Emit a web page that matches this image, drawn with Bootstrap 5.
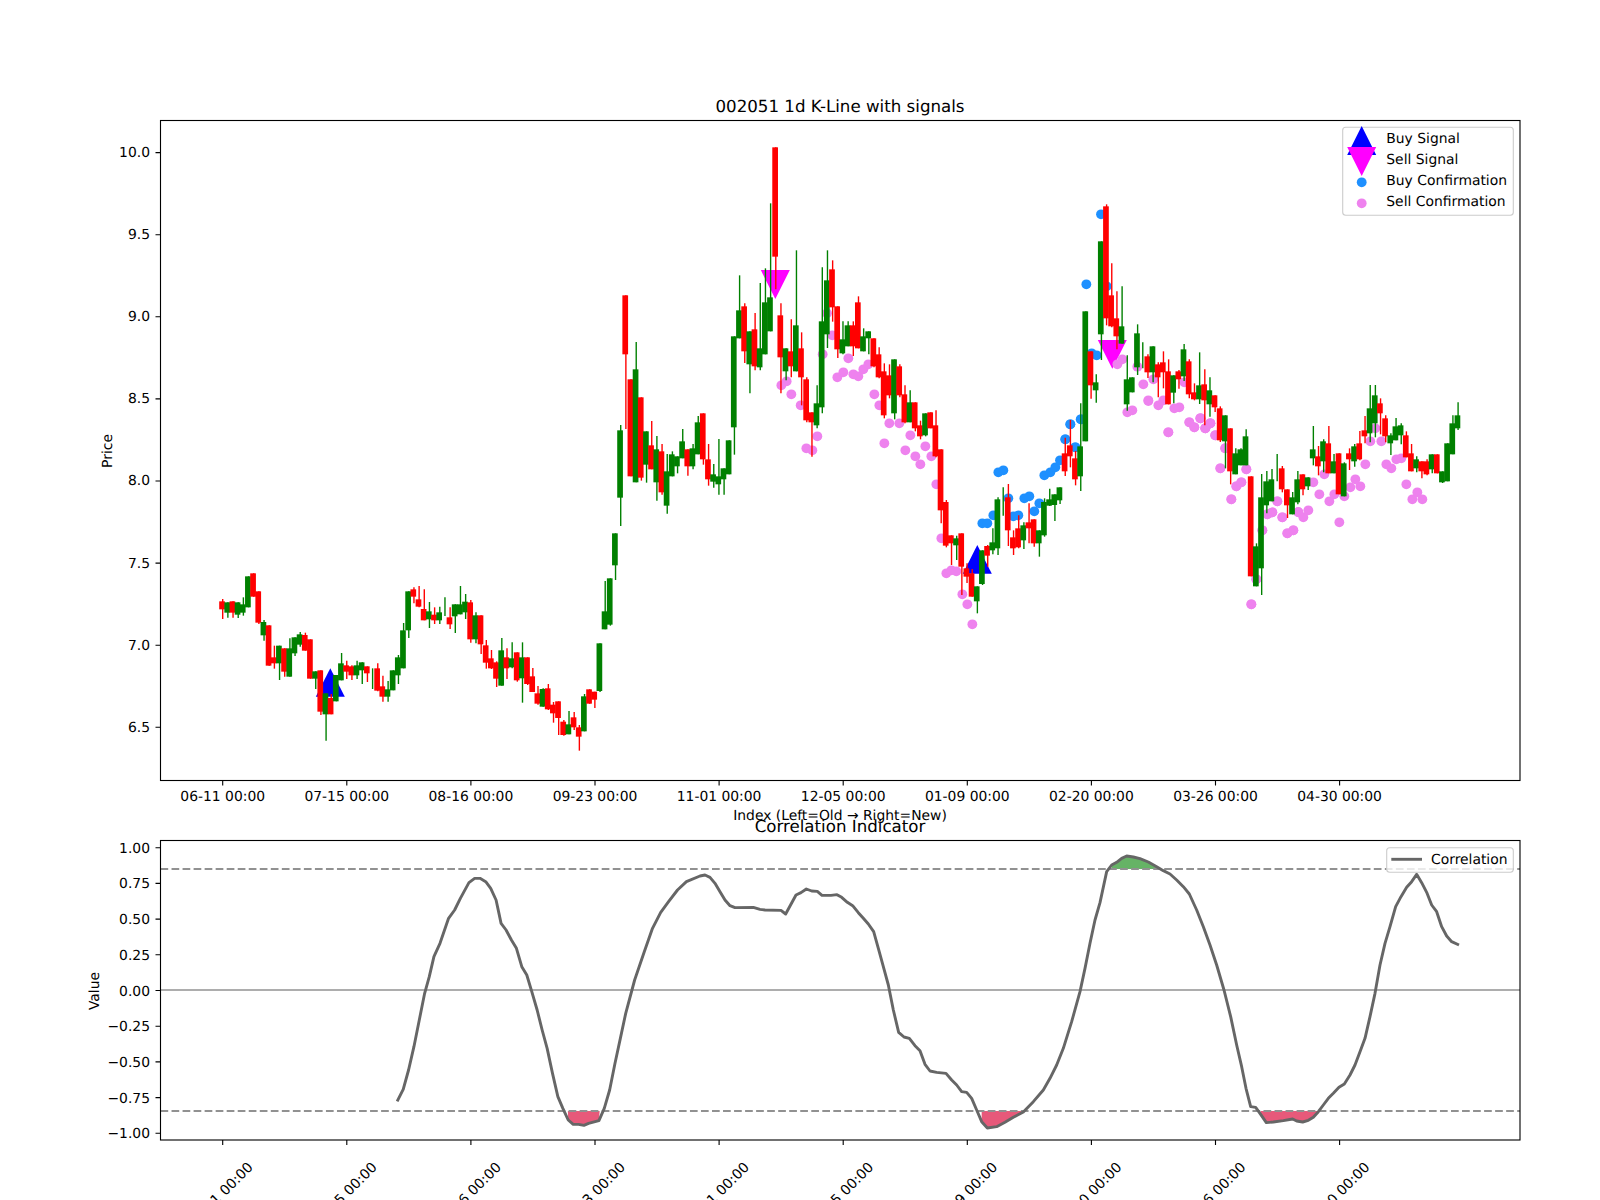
<!DOCTYPE html>
<html lang="en">
<head>
<meta charset="utf-8">
<title>002051 1d K-Line with signals</title>
<link href="https://cdn.jsdelivr.net/npm/bootstrap@5.3.0/dist/css/bootstrap.min.css" rel="stylesheet">
<style>
html,body{background:#fff;margin:0;padding:0}
.plot-figure{width:1600px;height:1200px;overflow:hidden}
.plot-svg{display:block;width:1600px;height:1200px}
.plot-svg text{font-family:"DejaVu Sans",sans-serif;fill:#000;text-rendering:geometricPrecision}
.tk{font-size:13.89px}
.ttl{font-size:16.67px}
.ttk text{text-anchor:end}
.mid{text-anchor:middle}
.frame{fill:none;stroke:#000;stroke-width:1.11}
.tickmark{stroke:#000;stroke-width:1.11;fill:none}
.lg-box{fill:#fff;fill-opacity:.8;stroke:#ccc;stroke-width:1.11}
.dash{stroke:#919191;stroke-width:2.08;stroke-dasharray:7.7 3.33;fill:none}
.zero{stroke:#adadad;stroke-width:2.08;fill:none}
.corr{stroke:#666;stroke-width:2.9;fill:none;stroke-linejoin:round}
.fill-r{fill:#e7597a}
.fill-g{fill:#66b366}
</style>
</head>
<body class="bg-white">
<main class="d-flex justify-content-start">
<figure class="plot-figure m-0">
<svg class="plot-svg" viewBox="0 0 1600 1200" xmlns="http://www.w3.org/2000/svg">
  <g id="marks"></g>
  <rect class="frame" x="160.5" y="120.5" width="1359.5" height="660"/>
  <path class="tickmark" id="ticks" d=""/>

  <!-- upper axes text -->
  <text class="ttl mid" x="840" y="112">002051 1d K-Line with signals</text>
  <g class="tk ttk">
    <text x="150" y="157">10.0</text><text x="150" y="239.1">9.5</text><text x="150" y="321.2">9.0</text>
    <text x="150" y="403.3">8.5</text><text x="150" y="485.4">8.0</text><text x="150" y="567.5">7.5</text>
    <text x="150" y="649.6">7.0</text><text x="150" y="731.7">6.5</text>
  </g>
  <text class="tk mid" transform="translate(112,451) rotate(-90)">Price</text>
  <g class="tk mid">
    <text x="222.7" y="801">06-11 00:00</text><text x="346.8" y="801">07-15 00:00</text>
    <text x="470.9" y="801">08-16 00:00</text><text x="595" y="801">09-23 00:00</text>
    <text x="719.1" y="801">11-01 00:00</text><text x="843.2" y="801">12-05 00:00</text>
    <text x="967.3" y="801">01-09 00:00</text><text x="1091.4" y="801">02-20 00:00</text>
    <text x="1215.5" y="801">03-26 00:00</text><text x="1339.6" y="801">04-30 00:00</text>
  </g>
  <text class="tk mid" x="840" y="820">Index (Left=Old → Right=New)</text>

  <!-- upper legend -->
  <rect class="lg-box" x="1342.7" y="127.3" width="170.6" height="88" rx="3"/>
  <polygon points="1361.7,126 1376.2,155 1347.2,155" fill="#00f"/>
  <polygon points="1347.2,147 1376.2,147 1361.7,176" fill="#f0f"/>
  <circle cx="1361.7" cy="182.3" r="4.9" fill="#1e90ff"/>
  <circle cx="1361.7" cy="203.3" r="4.9" fill="#ee82ee"/>
  <g class="tk">
    <text x="1386.3" y="143.3">Buy Signal</text><text x="1386.3" y="164.3">Sell Signal</text>
    <text x="1386.3" y="185.3">Buy Confirmation</text><text x="1386.3" y="206.3">Sell Confirmation</text>
  </g>

  <!-- lower axes -->
  <text class="ttl mid" x="840" y="832">Correlation Indicator</text>
  <g id="lower"></g>
  <rect class="frame" x="160.5" y="840.5" width="1359.5" height="299.5"/>
  <g class="tk ttk">
    <text x="150" y="852.7">1.00</text><text x="150" y="888.4">0.75</text><text x="150" y="924.1">0.50</text>
    <text x="150" y="959.8">0.25</text><text x="150" y="995.5">0.00</text><text x="150" y="1031.2">−0.25</text>
    <text x="150" y="1066.9">−0.50</text><text x="150" y="1102.6">−0.75</text><text x="150" y="1138.3">−1.00</text>
  </g>
  <text class="tk mid" transform="translate(99,991) rotate(-90)">Value</text>
  <g class="tk mid">
    <text transform="translate(220.2,1194.5) rotate(-45)" y="5">06-11 00:00</text>
    <text transform="translate(344.3,1194.5) rotate(-45)" y="5">07-15 00:00</text>
    <text transform="translate(468.4,1194.5) rotate(-45)" y="5">08-16 00:00</text>
    <text transform="translate(592.5,1194.5) rotate(-45)" y="5">09-23 00:00</text>
    <text transform="translate(716.6,1194.5) rotate(-45)" y="5">11-01 00:00</text>
    <text transform="translate(840.7,1194.5) rotate(-45)" y="5">12-05 00:00</text>
    <text transform="translate(964.8,1194.5) rotate(-45)" y="5">01-09 00:00</text>
    <text transform="translate(1088.9,1194.5) rotate(-45)" y="5">02-20 00:00</text>
    <text transform="translate(1213,1194.5) rotate(-45)" y="5">03-26 00:00</text>
    <text transform="translate(1337.1,1194.5) rotate(-45)" y="5">04-30 00:00</text>
  </g>
  <rect class="lg-box" x="1386.7" y="847.7" width="126.6" height="24.6" rx="3"/>
  <line class="corr" x1="1391.3" y1="859.3" x2="1422" y2="859.3"/>
  <text class="tk" x="1431" y="864">Correlation</text>
</svg>
</figure>
</main>
<script src="https://cdn.jsdelivr.net/npm/bootstrap@5.3.0/dist/js/bootstrap.bundle.min.js"></script>
<script>
const NS='http://www.w3.org/2000/svg';
function el(parent,n,a){const e=document.createElementNS(NS,n);for(const k in a)e.setAttribute(k,a[k]);parent.appendChild(e);return e}
const marks=document.getElementById('marks'),lower=document.getElementById('lower');
const X=i=>222.7+5.169*i;

/* signals */
[[330.3,668.3,696.7,'#00f'],[977.3,545,573.7,'#00f'],[775.3,299,270,'#f0f'],[1112.3,368.7,340,'#f0f']].forEach(t=>{
  el(marks,'polygon',{points:`${t[0]},${t[1]} ${t[0]+14.5},${t[2]} ${t[0]-14.5},${t[2]}`,fill:t[3]});
});

/* confirmations, read in crop coordinates: [x0,y0,list] */
const blue=[
 [900,400,"247,370 262,370 280,346 295,217 310,211 325,295 340,349 355,346 373,295 388,289 403,334 418,310 433,226 451,217 466,202 480,181 496,118 511,73 526,142 544,58"],
 [1040,180,"76,778 91,733 106,802 122,718 139,313 155,520 170,526 183,103 200,319"]];
const violet=[
 [600,130,"681,550 697,616 668,673 544,766 560,754 574,793 602,826 619,955 637,961 652,919 712,742 730,727 745,685 760,733 775,739 790,718 805,703 823,793 838,826 853,940 868,880 898,880 916,961 931,916 946,979 961,1003 976,949 994,979 1009,1063"],
 [900,400,"124,415 139,520 154,511 169,514 187,583 202,613 217,673 682,37 697,31 745,3 775,16 805,97 823,25 838,22 868,67 883,82 901,55 916,85 931,70 946,106 976,145 961,205 1039,208 1024,247 1009,259 994,298 1087,391 1102,343 1117,337 1069,538 1054,613 1132,304 1147,352 1162,400 1180,391 1195,336"],
 [1040,180,"232,553 247,538 292,560 310,613 325,661 340,598 370,661 433,607 448,727 463,742 481,715 496,745 511,730 526,766 385,757 556,805"],
 [1200,380,"2,115 16,145 31,130 46,166 76,205 61,265 139,268 94,358 109,319 124,307 187,451 169,598 154,673 202,403 217,397 232,364 247,412 262,460 280,451 295,397 310,412 325,391 340,307 358,343 373,283 388,364 403,343 418,427 433,349 451,322 466,298 481,319 496,253 511,184 526,145 544,184 559,253 574,265 589,238 604,235 619,313 637,358 652,337 667,358"]];
function dots(sets,col){sets.forEach(s=>s[2].split(' ').forEach(p=>{const [a,b]=p.split(',').map(Number);
  el(marks,'circle',{cx:s[0]+a/3,cy:s[1]+b/3,r:4.9,fill:col});}));}
dots(blue,'#1e90ff');dots(violet,'#ee82ee');

/* candles: colour bodyTop bodyBottom wickTop wickBottom, in crop coordinates */
const candles=[
[500,`r 304 328 297 357|g 307 338 307 353|r 304 338 304 353|g 307 344 307 354|g 313 338 292 347|g 229 322|r 220 290|r 274 368 274 372|g 366 406 360 422|r 376 497|r 472 490 437 506|g 437 490 437 540|r 445 515 445 530|g 445 530 415 530|g 412 460 412 468|g 403 434 396 440|r 405 452 398 452|r 418 536|g 514 536 514 567|r 511 635 511 645|g 580 643 580 722|r 594 643 582 643|g 525 604|g 490 541 459 541|r 496 515 482 537|r 499 526 496 540|g 496 526 482 537|g 487 511 487 552|r 499 520 499 546|g - - 505 567|r 505 572 490 574|r 559 590 527 605|g 568 590 543 605|g 511 571|g 472 526 465 552|g 391 505 369 505|g 274 391 274 414|r 268 290 262 310|r 298 320 258 322|r 327 361 268 361|g 334 358 306 384|r 344 361 322 372|g 337 361 320 372|g - - 292 348|r 352 373 322 387|g 313 349 313 399|g 313 343 258 343|g 305 337 282 357|r 307 418 300 428|g 346 418 337 430|r 346 433 346 462|r 436 488 420 506|r 475 505 450 507|r 487 536 484 561|g 451 557 414 557|r 472 505 445 537|g 475 502 427 505|r 457 541 457 545|g 472 535 427 608|r 472 552 472 555|r 529 576 504 576|r 580 611 558 614|g 567 620 565 620|r 565 628 552 630|r 614 640 606 668|r 604 654 604 705|r 665 705 660 707|g 673 703 633 703|r 652 682 636 690|r 682 710 675 752|g 589 694 582 694|r 568 611|r 575 599 575 624|g 430 573 430 576|g 334 388 243 388|g 235 374 235 377|g 100 196 100 240`],
[130,`g 901 1103 885 1188|r 496 673 496 897|r 748 1039|g 718 1057 636 1057|r 802 1043 802 1052|g 904 1004 904 1058|r 946 1018 873 1018|g 958 1057 918 1112|r 964 1087 942 1094|g 1024 1127 972 1151|g 973 1039 964 1039|g 979 1009 979 1030|g 934 985 897 985|r 958 1009 958 1037|g 955 1009 942 1018|g 877 973 858 973|r 850 988 850 1004|r 988 1048 942 1067|g 1033 1055 1002 1073|g 1039 1063 927 1094|g 1015 1048 1015 1094|g 931 1033|g 619 892 619 974|g 541 625 436 625|r 529 664 520 699|g 604 703 604 790|r 598 709 549 721|g 655 712 459 721|g 517 673 415 673|g 502 604 220 604|r 52 380 52 478|r 556 682 520 790|g 655 724 655 751|r 664 709 568 742|g 586 724 361 724|r 655 742 607 826|r 748 871 742 877|r 847 877 847 980|g 820 886 766 895|g 574 832 412 850|g 451 613 361 654|r 418 532 391 575|r 529 658 529 684|g 628 670 574 673|g 586 649 574 649|r 586 649 574 678|r 517 655 499 655|g 619 664 595 664|g 604 625 604 673|r 625 709 625 712|r 673 742 652 745|r 724 856 700 865|r 736 796 703 805|g 688 850 688 868|r 709 796 703 802|r 793 877 766 880|g 817 877 781 877|r 817 895 817 904|r 886 919 872 928|g 850 916 850 919|r 847 895|r 886 979 841 982|r 958 1141 958 1180`],
[400,`r 306 437 300 442|r 406 430 406 495|g 415 436 407 480|r 400 500 400 585|r 505 530 490 549|r 520 590 507 590|g 559 604 559 640|g 451 552 451 555|r 438 467 435 500|g 427 451 385 463|g 298 445 292 465|g - - 262 347|r 292 391 252 438|r 412 445 391 465|r 385 442 346 445|g 376 421 367 447|r 367 385 310 430|r 358 430 358 440|g 391 430 391 470|g 306 406 295 410|g 298 317 266 318|g 283 315 283 363|g 262 301 262 312|r 160 214 113 228|r 136 169 60 202|r 175 238 153 256|g 139 229 10 273`],
[180,`g 394 784|r 514 616 514 656|g 607 631 583 668|g 184 463 184 540|r 79 415 73 436|r 346 439 250 442|r 415 469 334 508|g 439 491 319 491|g 598 673 526 692|g 592 637|g 460 562 433 585|g - - 487 565|r 529 577 523 594|g 499 577 499 607|r 553 592 547 652|r 547 577 514 625|r 574 673 538 673|g 586 638 586 670|r 574 598 570 626|g 508 589 492 603|r 544 643 538 655|r 637 658 610 661|g 616 658 517 672|r 613 661 568 736|g 631 673 592 710|r 646 682 646 696|r 685 781 679 786|g 706 784 706 865|r 745 874 745 913|g 820 883 805 883|g 808 856 805 856|g 769 856 748 856`],
[380,`r 289 589|g 499 619 490 619|g 352 565 282 645|g 304 376 273 400|g 298 364 267 364|g - - 222 304|r 265 328 258 337|r 328 376 328 414|g 352 403 336 403|g 298 367 273 373|r 283 328 283 346|g 292 319 292 330|g 208 235 138 256|r 229 259 198 286|g 184 244 178 277|r 190 280 138 280|g 244 280 222 280|r 220 343|g 250 349 247 349|r 220 238 205 270|g 199 244 192 260|r 190 238 153 241|r 151 169 108 190|g 85 160 15 187|g 46 130 15 172|r 70 100 55 163|r 115 169 106 187|g 166 190 160 225|g 139 181 114 181|g 136 166 130 193|r 166 232 154 232|r 220 274 192 274|g 238 265 229 277|r 244 274 244 295|r 244 283 238 286|g 223 268 223 280|r 223 280|g 274 307 274 309|g 190 304|g 130 223 106 223|g 106 145 67 150`]
];
let idx=0;
candles.forEach(([y0,list])=>list.split('|').forEach(row=>{
  const p=row.split(' '),col=p[0]==='r'?'#f00':'#008000',x=X(idx),Y=v=>y0+Number(v)/3;
  const has=p[1]!=='-';
  const wt=p[3]!==undefined?Y(p[3]):Y(p[1]),wb=p[4]!==undefined?Y(p[4]):Y(p[2]);
  el(marks,'line',{x1:x,x2:x,y1:wt,y2:wb,stroke:col,'stroke-width':1.39});
  if(has)el(marks,'rect',{x:x-3.5,y:Y(p[1]),width:5.7,height:Y(p[2])-Y(p[1]),fill:col});
  idx++;
}));

/* tick marks */
let d='';
for(let k=0;k<10;k++){const x=222.7+124.1*k;d+=`M${x} 780.5v5M${x} 1140v5`}
for(let k=0;k<8;k++){const y=152.6+82.1*k;d+=`M160.5 ${y}h-5`}
for(let k=0;k<9;k++){const y=847.7+35.7*k;d+=`M160.5 ${y}h-5`}
document.getElementById('ticks').setAttribute('d',d);

/* correlation */
const conv=(s,sx,x0)=>s.split(' ').map(p=>{const [a,b]=p.split(',').map(Number);return [x0+a/sx,780+b/3]});
const pts=[].concat(
 conv("720,964 737,928 752,870 767,800 782,720 797,640 810,590 823,530 840,490 864,415 881,390 897,355 921,308 937,295 952,295 968,305 982,325 997,360 1004,395 1011,430 1025,450 1040,480 1054,505 1069,560 1083,585 1097,635 1112,690 1126,750 1140,805 1155,880 1170,950 1184,985 1199,1020 1213,1033 1228,1033 1243,1036 1256,1030 1285,1022 1300,985 1315,930 1330,850 1345,775 1360,700 1385,600 1412,515 1435,445 1458,397 1480,365 1505,330 1530,305",2.8,140),
 conv("0,288 15,285 30,292 45,310 60,335 75,360 90,377 105,383 160,382 180,388 195,390 243,391 257,402 288,345 303,338 319,327 335,333 352,334 366,346 393,346 411,344 425,352 442,367 458,377 475,398 490,415 505,432 521,455 535,505 550,560 565,615 580,690 596,757 612,771 628,775 645,797 660,812 675,853 690,873 710,877 738,880 755,900 770,915 785,935 800,937 815,955 830,990 845,1025 862,1044 890,1040 915,1027 940,1012 970,996 1000,965 1030,930 1050,895 1070,855 1090,805 1115,725 1140,635 1155,565 1170,490 1185,420",3,700),
 conv("0,368 20,275 35,255 50,247 65,235 80,228 100,231 120,236 145,246 170,260 190,272 210,282 230,300 250,320 268,342 290,390 310,440 330,495 350,555 372,630 392,710 410,795 425,860 438,925 452,980 467,982 482,1003 499,1028 520,1026 550,1022 578,1017 590,1023 608,1026 625,1021 640,1012 655,995 670,975 685,955 700,940 717,922 733,912 750,885 765,855 780,815 795,775 810,710 825,640 840,555 855,490 870,440 887,380 903,350 920,322 935,305 950,283 965,308 980,337 995,375 1010,395 1025,440 1040,468 1055,485 1077,495",3,1100));
const fills=[
 ['fill-r',"1198,993 1287,993 1285,1022 1256,1030 1243,1036 1228,1033 1213,1033 1199,1020",2.8,140],
 ['fill-r',"845,993 970,993 970,996 940,1012 915,1027 890,1040 862,1044 845,1025",3,700],
 ['fill-r',"482,993 655,993 655,995 640,1012 625,1021 608,1026 590,1023 578,1017 550,1022 520,1026 499,1028 482,1003",3,1100],
 ['fill-g',"35,267 170,267 170,260 145,246 120,236 100,231 80,228 65,235 50,247 35,255",3,1100]];
fills.forEach(f=>el(lower,'polygon',{class:f[0],points:conv(f[1],f[2],f[3]).map(p=>p.join(',')).join(' ')}));
el(lower,'line',{class:'dash',x1:160.5,x2:1520,y1:869,y2:869});
el(lower,'line',{class:'dash',x1:160.5,x2:1520,y1:1111,y2:1111});
el(lower,'line',{class:'zero',x1:160.5,x2:1520,y1:990,y2:990});
el(lower,'polyline',{class:'corr',points:pts.map(p=>p.join(',')).join(' ')});
</script>
</body>
</html>
